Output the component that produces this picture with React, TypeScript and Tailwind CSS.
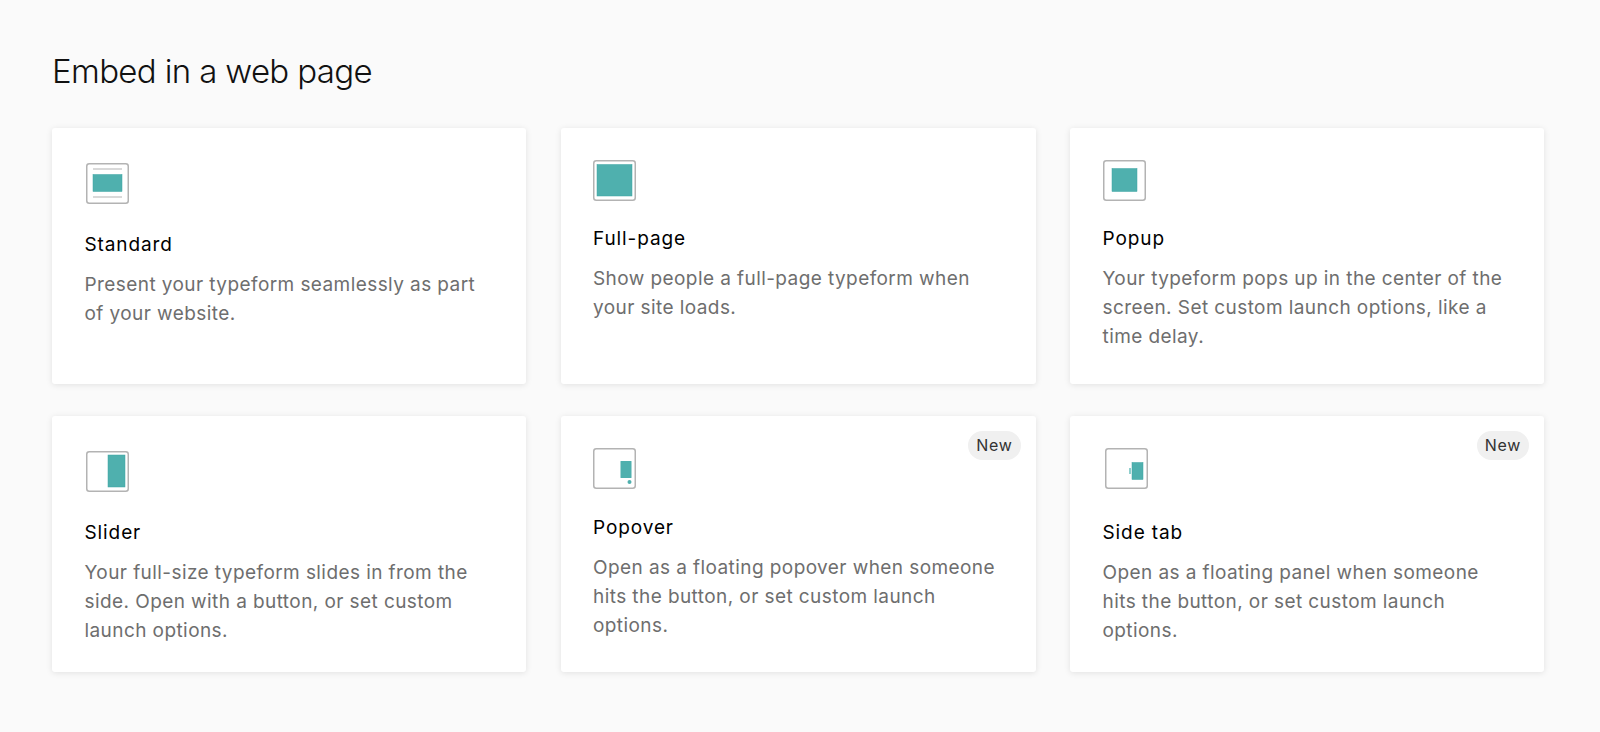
import React from "react";

const TEAL = "#4fb0ae";
const EDGE = "#3fa5a3";
const LINE = "#b3b3b3";

const Frame = ({ children }: { children: React.ReactNode }) => (
  <svg width="43" height="41" viewBox="0 0 43 41" fill="none" className="block">
    <rect x="0.75" y="0.75" width="41.5" height="39.5" rx="2.5" fill="#fff" stroke={LINE} strokeWidth="1.5" />
    {children}
  </svg>
);

const StandardIcon = () => (
  <Frame>
    <rect x="7" y="5.5" width="29" height="1" fill={LINE} />
    <rect x="7" y="11.5" width="29" height="17" fill={TEAL} stroke={EDGE} strokeWidth="0.5" />
    <rect x="7" y="33.5" width="29" height="1" fill={LINE} />
  </Frame>
);

const FullPageIcon = () => (
  <Frame>
    <rect x="4" y="4.5" width="35" height="31.5" fill={TEAL} stroke={EDGE} strokeWidth="0.5" />
  </Frame>
);

const PopupIcon = () => (
  <Frame>
    <rect x="9" y="8.5" width="25" height="23" fill={TEAL} stroke={EDGE} strokeWidth="0.5" />
  </Frame>
);

const SliderIcon = () => (
  <Frame>
    <rect x="22" y="4" width="17" height="32" fill={TEAL} stroke={EDGE} strokeWidth="0.5" />
  </Frame>
);

const PopoverIcon = () => (
  <Frame>
    <rect x="27.5" y="13" width="11" height="17" rx="0.5" fill={TEAL} />
    <circle cx="36.5" cy="34" r="2" fill={TEAL} />
  </Frame>
);

const SideTabIcon = () => (
  <Frame>
    <rect x="27" y="14.5" width="11" height="17" fill={TEAL} stroke={EDGE} strokeWidth="0.5" />
    <rect x="24" y="20" width="2" height="6" fill="#8fcfcd" />
  </Frame>
);

const cards = [
  {
    title: "Standard",
    text: "Present your typeform seamlessly as part of your website.",
    icon: <StandardIcon />,
    top: "pt-[35px]",
    iconOffset: "ml-[1.5px]",
    gap: "mt-[29px]",
  },
  {
    title: "Full-page",
    text: "Show people a full-page typeform when your site loads.",
    icon: <FullPageIcon />,
    top: "pt-[32px]",
    iconOffset: "",
    gap: "mt-[26px]",
  },
  {
    title: "Popup",
    text: "Your typeform pops up in the center of the screen. Set custom launch options, like a time delay.",
    icon: <PopupIcon />,
    top: "pt-[32px]",
    iconOffset: "",
    gap: "mt-[26px]",
  },
  {
    title: "Slider",
    text: "Your full-size typeform slides in from the side. Open with a button, or set custom launch options.",
    icon: <SliderIcon />,
    top: "pt-[35px]",
    iconOffset: "ml-[1.5px]",
    gap: "mt-[29px]",
  },
  {
    title: "Popover",
    text: "Open as a floating popover when someone hits the button, or set custom launch options.",
    icon: <PopoverIcon />,
    top: "pt-[32px]",
    iconOffset: "",
    gap: "mt-[27px]",
    isNew: true,
  },
  {
    title: "Side tab",
    text: "Open as a floating panel when someone hits the button, or set custom launch options.",
    icon: <SideTabIcon />,
    top: "pt-[32px]",
    iconOffset: "ml-[2px]",
    gap: "mt-[32px]",
    isNew: true,
  },
];

export default function App() {
  return (
    <div className="min-h-[732px] bg-[#fafafa] px-[52px] pt-[49px] font-['Inter',sans-serif]">
      <h1 className="text-[33px] leading-[44px] font-light tracking-[-0.65px] text-[#111111]">Embed in a web page</h1>
      <div className="mt-[35px] grid grid-cols-[474px_475px_474px] gap-x-[34.5px] gap-y-[32px]">
        {cards.map((card) => (
          <div
            key={card.title}
            className={`relative h-[256px] rounded-[3px] bg-white pl-[32.5px] pr-[30px] shadow-[0_1px_6px_rgba(0,0,0,0.1)] ${card.top}`}
          >
            {card.isNew && (
              <span className="absolute right-[15px] top-[15px] rounded-full bg-[#f0f0f0] px-[8px] h-[29px] leading-[29px] text-[16px] tracking-[0.7px] text-[#333333]">
                New
              </span>
            )}
            <div className={card.iconOffset}>{card.icon}</div>
            <h2 className={`${card.gap} text-[19px] leading-[24px] font-normal tracking-[0.9px] text-black`}>{card.title}</h2>
            <p className="mt-[13px] text-[19px] leading-[29px] tracking-[0.42px] text-[#6e6e6e]">{card.text}</p>
          </div>
        ))}
      </div>
    </div>
  );
}
